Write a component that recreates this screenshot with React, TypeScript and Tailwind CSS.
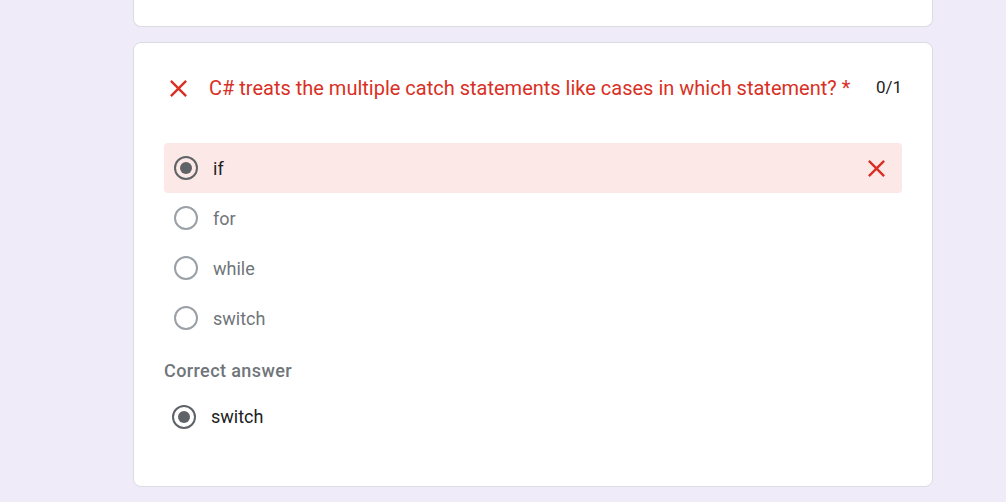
const options = ['if', 'for', 'while', 'switch']

function Cross() {
  return (
    <svg viewBox="0 0 24 24" className="h-[29px] w-[29px] shrink-0 fill-[#d93025]">
      <path d="M19 6.41L17.59 5 12 10.59 6.41 5 5 6.41 10.59 12 5 17.59 6.41 19 12 13.41 17.59 19 19 17.59 13.41 12z" />
    </svg>
  )
}

function Radio({ checked }: { checked?: boolean }) {
  return (
    <span
      className={
        'flex h-6 w-6 shrink-0 items-center justify-center rounded-full border-2 ' +
        (checked ? 'border-[#5f6368]' : 'border-[#9aa0a6]')
      }
    >
      {checked && <span className="h-3 w-3 rounded-full bg-[#5f6368]" />}
    </span>
  )
}

export default function App() {
  return (
    <div
      className="h-[502px] w-[1006px] overflow-hidden bg-[#f0ebf8] pl-[133px]"
      style={{ fontFamily: 'Roboto, Arial, sans-serif' }}
    >
      {/* previous card tail */}
      <div className="-mt-[20px] h-[47px] w-[800px] rounded-b-lg border border-t-0 border-[#dadce0] bg-white" />

      <div className="mt-[15px] w-[800px] rounded-lg border border-[#dadce0] bg-white pb-[56px] pl-[30px] pr-[30px] pt-[33px]">
        {/* question */}
        <div className="flex h-6 items-center">
          <Cross />
          <span className="ml-[16px] flex-1 text-[20px] text-[#d93025]">
            C# treats the multiple catch statements like cases in which statement? *
          </span>
          <span className="text-[17px] text-[#202124]">0/1</span>
        </div>

        {/* options */}
        <div className="mt-[43px] flex flex-col">
          {options.map((o, i) => (
            <div
              key={o}
              className={
                'flex h-[50px] items-center rounded pl-[10px] pr-[11px] ' +
                (i === 0 ? 'bg-[#fce8e6]' : '')
              }
            >
              <Radio checked={i === 0} />
              <span
                className={
                  'ml-[15px] flex-1 text-[18px] ' + (i === 0 ? 'text-[#202124]' : 'text-[#70757a]')
                }
              >
                {o}
              </span>
              {i === 0 && <Cross />}
            </div>
          ))}
        </div>

        {/* correct answer */}
        <div className="mt-[14px] text-[18px] font-medium tracking-[0.4px] text-[#70757a]">
          Correct answer
        </div>
        <div className="mt-[19px] flex items-center pl-2">
          <Radio checked />
          <span className="ml-[15px] text-[18px] text-[#202124]">switch</span>
        </div>
      </div>
    </div>
  )
}
